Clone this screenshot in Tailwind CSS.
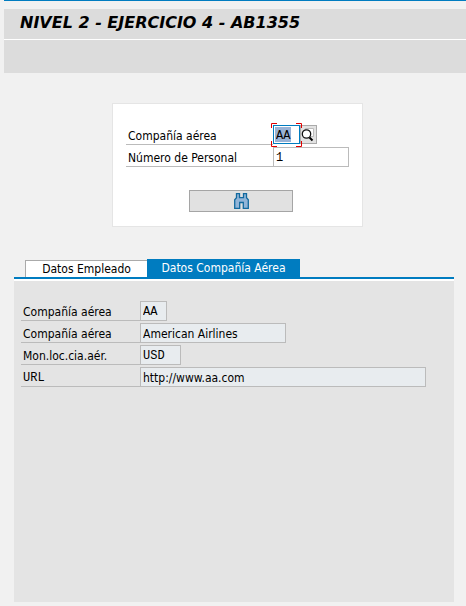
<!DOCTYPE html>
<html lang="es">
<head>
<meta charset="utf-8">
<meta name="viewport" content="width=device-width, initial-scale=1">
<title>Nivel 2 - Ejercicio 4</title>
<script src="https://cdn.jsdelivr.net/npm/@tailwindcss/browser@4"></script>
</head>
<body class="flex min-h-screen flex-col bg-[#f1f1f1] pb-1 font-['DejaVu_Sans_Condensed','Noto_Sans',sans-serif] text-[12px] leading-[18px] text-black">
<header class="ml-1 border-t border-[#007cc0] pt-2">
  <h1 class="border-b border-white bg-[#dcdcdc] pl-4 font-['DejaVu_Sans',sans-serif] text-[16px] leading-[28px] pb-0.5 font-bold italic">NIVEL 2 - EJERCICIO 4 - AB1355</h1>
  <div class="h-[33px] bg-[#dcdcdc]"></div>
</header>

<main class="flex flex-1 flex-col">
  <form class="mt-[30px] ml-28 flex w-[251px] flex-col border border-[#e5e5e5] bg-white pt-[21px] pr-[13px] pb-[14px] pl-[13px]">
    <div class="flex h-5">
      <label for="carrier" class="w-[147px] border-b border-[#bbb] pl-0.5 leading-[22px]">Compañía aérea</label>
      <div class="relative">
        <input id="carrier" value="AA" class="block h-[19px] w-[27px] border border-[#007cc0] bg-[linear-gradient(#99b3d6,#99b3d6)] bg-[length:16px_15px] bg-[position:1px_1px] bg-no-repeat pt-0.5 pl-0.5 font-['Liberation_Mono',monospace] outline-none">
        <svg class="pointer-events-none absolute -top-0.5 -left-0.5 h-6 w-[31px]" viewBox="0 0 31 24" fill="none" stroke="#e00000"><path d="M.5 5V.5H6M25 .5h5.500V5M.5 18v5.500H6M25 23.500h5.500V18"/></svg>
      </div>
      <button type="button" aria-label="Buscar valores" class="h-[19px] w-[17px] border border-[#aaa] bg-[#e2e2e2]">
        <svg class="block h-[17px] w-[15px]" viewBox="0 0 15 17" fill="none"><path d="M4.500 2.500h8v8h-8z" fill="#fff" stroke="#bbb"/><circle cx="5.500" cy="8" r="4.200" fill="#fff" stroke="#111" stroke-width="1.300"/><path d="M8.500 11.500l3 3" stroke="#000" stroke-width="2"/></svg>
      </button>
    </div>
    <div class="mt-0.5 flex h-5">
      <label for="person" class="w-[147px] border-b border-[#bbb] pl-0.5 leading-[22px]">Número de Personal</label>
      <input id="person" value="1" class="h-5 w-[76px] border border-[#bbb] bg-white pt-0.5 pl-0.5 font-['Liberation_Mono',monospace] outline-none">
    </div>
    <button type="button" aria-label="Buscar" class="mt-[23px] ml-[63px] flex h-[22px] w-[104px] items-center justify-center border border-[#a5a5a5] bg-[#e1e1e1]">
      <svg class="h-4 w-[15px]" viewBox="0 0 15 16" fill="#92b5d8" stroke="#136a9f" stroke-width="1.300"><path d="M2.500 .7h3v4h4v-4h3v4l1.800 2v8.600h-5V9.500h-3.600v5.800h-5V6.700l1.800-2z"/></svg>
    </button>
  </form>

  <section class="mt-8 mr-3 ml-[14px] flex flex-1 flex-col">
    <div role="tablist" class="flex items-end border-b-2 border-[#007cc0] pl-[11px]">
      <button type="button" role="tab" aria-selected="false" class="h-[17px] w-[122px] border-t border-l border-[#aaa] bg-white leading-4">Datos Empleado</button>
      <button type="button" role="tab" aria-selected="true" class="h-[18px] w-[153px] bg-[#007cc0] leading-[18px] text-white">Datos Compañía Aérea</button>
    </div>
    <div role="tabpanel" class="flex flex-1 flex-col gap-0.5 border-t-2 border-white bg-[#e4e4e4] pt-5 pr-7 pl-[7px]">
      <div class="flex h-5"><label for="code" class="w-[119px] border-b border-[#bbb] pl-0.5 leading-[22px]">Compañía aérea</label><input id="code" readonly value="AA" class="h-5 w-[27px] border border-[#bbb] bg-[#e8ecef] pt-0.5 pl-0.5 font-['Liberation_Mono',monospace]"></div>
      <div class="flex h-5"><label for="name" class="w-[119px] border-b border-[#bbb] pl-0.5 leading-[22px]">Compañía aérea</label><input id="name" readonly value="American Airlines" class="h-5 w-[146px] border border-[#bbb] bg-[#e8ecef] pt-0.5 pl-0.5"></div>
      <div class="flex h-5"><label for="curr" class="w-[119px] border-b border-[#bbb] pl-0.5 leading-[22px]">Mon.loc.cia.aér.</label><input id="curr" readonly value="USD" class="h-5 w-[41px] border border-[#bbb] bg-[#e8ecef] pt-0.5 pl-0.5 font-['Liberation_Mono',monospace]"></div>
      <div class="flex h-5"><label for="url" class="w-[119px] border-b border-[#bbb] pl-0.5 font-['Liberation_Mono',monospace] leading-[22px]">URL</label><input id="url" readonly value="http://www.aa.com" class="h-5 min-w-0 flex-1 border border-[#bbb] bg-[#e8ecef] pt-0.5 pl-0.5"></div>
    </div>
  </section>
</main>
</body>
</html>
